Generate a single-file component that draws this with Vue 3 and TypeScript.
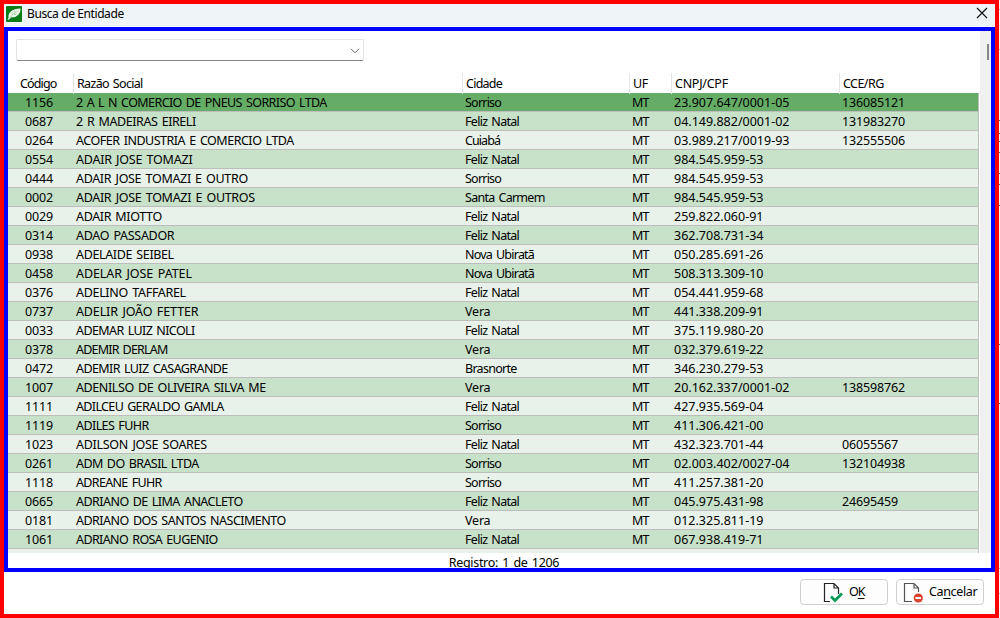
<script setup lang="ts">
import type { Directive } from 'vue'

type Row = [string, string, number, string, string, string]

const rows: Row[] = [
  ['1156', '2 A L N COMERCIO DE PNEUS SORRISO LTDA', 251, 'Sorriso', '23.907.647/0001-05', '136085121'],
  ['0687', '2 R MADEIRAS EIRELI', 120, 'Feliz Natal', '04.149.882/0001-02', '131983270'],
  ['0264', 'ACOFER INDUSTRIA E COMERCIO LTDA', 218, 'Cuiabá', '03.989.217/0019-93', '132555506'],
  ['0554', 'ADAIR JOSE TOMAZI', 116.5, 'Feliz Natal', '984.545.959-53', ''],
  ['0444', 'ADAIR JOSE TOMAZI E OUTRO', 172, 'Sorriso', '984.545.959-53', ''],
  ['0002', 'ADAIR JOSE TOMAZI E OUTROS', 179, 'Santa Carmem', '984.545.959-53', ''],
  ['0029', 'ADAIR MIOTTO', 86, 'Feliz Natal', '259.822.060-91', ''],
  ['0314', 'ADAO PASSADOR', 98.5, 'Feliz Natal', '362.708.731-34', ''],
  ['0938', 'ADELAIDE SEIBEL', 98, 'Nova Ubiratã', '050.285.691-26', ''],
  ['0458', 'ADELAR JOSE PATEL', 116, 'Nova Ubiratã', '508.313.309-10', ''],
  ['0376', 'ADELINO TAFFAREL', 110, 'Feliz Natal', '054.441.959-68', ''],
  ['0737', 'ADELIR JOÃO FETTER', 122.5, 'Vera', '441.338.209-91', ''],
  ['0033', 'ADEMAR LUIZ NICOLI', 119, 'Feliz Natal', '375.119.980-20', ''],
  ['0378', 'ADEMIR DERLAM', 92, 'Vera', '032.379.619-22', ''],
  ['0472', 'ADEMIR LUIZ CASAGRANDE', 152, 'Brasnorte', '346.230.279-53', ''],
  ['1007', 'ADENILSO DE OLIVEIRA SILVA ME', 190, 'Vera', '20.162.337/0001-02', '138598762'],
  ['1111', 'ADILCEU GERALDO GAMLA', 148, 'Feliz Natal', '427.935.569-04', ''],
  ['1119', 'ADILES FUHR', 73, 'Sorriso', '411.306.421-00', ''],
  ['1023', 'ADILSON JOSE SOARES', 131, 'Feliz Natal', '432.323.701-44', '06055567'],
  ['0261', 'ADM DO BRASIL LTDA', 123, 'Sorriso', '02.003.402/0027-04', '132104938'],
  ['1118', 'ADREANE FUHR', 86, 'Sorriso', '411.257.381-20', ''],
  ['0665', 'ADRIANO DE LIMA ANACLETO', 167, 'Feliz Natal', '045.975.431-98', '24695459'],
  ['0181', 'ADRIANO DOS SANTOS NASCIMENTO', 210, 'Vera', '012.325.811-19', ''],
  ['1061', 'ADRIANO ROSA EUGENIO', 142, 'Feliz Natal', '067.938.419-71', ''],
]

const cityWidths: Record<string, number> = {
  Sorriso: 36.5,
  'Feliz Natal': 54.5,
  'Cuiabá': 35.5,
  'Santa Carmem': 80,
  'Nova Ubiratã': 69.5,
  Vera: 25.5,
  Brasnorte: 52,
}

// Spreads the letters of a label evenly over a given width
const vFit: Directive<HTMLElement, number> = {
  mounted(el, { value }) {
    const n = (el.textContent ?? '').length
    if (n > 1) {
      const natural = el.getBoundingClientRect().width
      el.style.letterSpacing = `${(value - natural) / (n - 0.5)}px`
    }
  },
}
</script>

<template>
  <div class="screen">
    <div class="window">
      <header class="titlebar">
        <svg class="logo" width="16" height="16" viewBox="0 0 16 16">
          <rect width="16" height="16" rx="1" fill="#087d18" />
          <path d="M2.500 11.500C2 6.500 6 2.500 14.500 2.500C14.500 5 14 7 12.500 8.500C10.500 11 8 11.500 5.500 11.300L3 13.500L1.500 14Z" fill="#f1faee" />
          <path d="M3 12.500L6.500 8.500L12.500 4.500M6.500 8.500L6 6M9 6.800V4.500M8 8.500H10.500" fill="none" stroke="#8cc58c" stroke-width=".7" />
        </svg>
        <span v-fit="97" class="title">Busca de Entidade</span>
        <svg class="close" width="12" height="12" viewBox="0 0 12 12"><path d="M1 1L11 11M11 1L1 11" stroke="#111" stroke-width="1.150" /></svg>
      </header>
      <main class="panel">
        <div class="content">
          <div class="combo">
            <svg width="10" height="6" viewBox="0 0 10 6"><path d="M1 .8L5 4.800L9 .8" fill="none" stroke="#666" stroke-width="1" /></svg>
          </div>
          <div class="grid">
            <div class="line head">
              <div class="c0"><span v-fit="37">Código</span></div>
              <div><span v-fit="66">Razão Social</span></div>
              <div><span v-fit="36.5">Cidade</span></div>
              <div><span v-fit="15">UF</span></div>
              <div><span v-fit="53">CNPJ/CPF</span></div>
              <div><span v-fit="41">CCE/RG</span></div>
            </div>
            <div class="body">
              <div v-for="(r, i) in rows" :key="r[0]" class="line row" :class="{ selected: i === 0, odd: i % 2 === 1 }">
                <div class="c0"><span v-fit="28">{{ r[0] }}</span></div>
                <div><span v-fit="r[2]">{{ r[1] }}</span></div>
                <div><span v-fit="cityWidths[r[3]]">{{ r[3] }}</span></div>
                <div><span v-fit="17">MT</span></div>
                <div><span v-fit="r[4].length > 14 ? 115.5 : 89.5">{{ r[4] }}</span></div>
                <div><span v-fit="r[5].length * 7">{{ r[5] }}</span></div>
              </div>
              <div class="row"></div>
            </div>
          </div>
          <div class="status"><span v-fit="110.5">Registro: 1 de 1206</span></div>
        </div>
        <div class="scroll"><div class="thumb"></div></div>
      </main>
      <footer class="actions">
        <button class="ok">
          <svg width="20" height="21" viewBox="0 0 20 21">
            <path d="M7 19.500H1.500V1.500H11L15.500 6V12M11 1.500V6H15.500" fill="none" stroke="#222" stroke-width="1.200" />
            <path d="M8 14.500L12 18.500L19 11.500" fill="none" stroke="#0b9b57" stroke-width="2.800" />
          </svg>
          <span v-fit="16">O<u>K</u></span>
        </button>
        <button class="cancel">
          <svg width="20" height="21" viewBox="0 0 20 21">
            <path d="M9 19.500H1.500V1.500H11L15.500 6V10M11 1.500V6H15.500" fill="none" stroke="#555" stroke-width="1.200" />
            <circle cx="15.300" cy="16" r="4.600" fill="#d8452c" />
            <path d="M12.500 16H18" stroke="#fff" stroke-width="2" />
          </svg>
          <span v-fit="48.5">Ca<u>n</u>celar</span>
        </button>
      </footer>
    </div>
    <svg class="edge" width="1" height="618" viewBox="0 0 1 618">
      <path d="M0 9.500H1M0 49.500H1M0 568.500H1M0 593.500H1" stroke="#bbb" />
      <path d="M0 120.500H1M0 133.500H1M0 141.500H1M0 152.500H1M0 173.500H1M0 184.500H1M0 205.500H1M0 344.500H1M0 403.500H1" stroke="#555" />
    </svg>
  </div>
</template>

<style>
body { margin: 0; overflow: hidden; }
</style>
<style scoped>
.screen { width: 1000px; height: 618px; display: flex; background: #fff; font: 12.5px/18px "Noto Sans", "DejaVu Sans", sans-serif; word-spacing: 1.4px; color: #000; }
.screen * { box-sizing: border-box; }
span { white-space: pre; display: inline-block; }
.window { width: 999px; height: 618px; box-sizing: border-box; border: 4px solid #f00; display: flex; flex-direction: column; background: #fff; }
.edge { flex: none; background: #fafafa; }
.titlebar { height: 23px; flex: none; background: #eff4f9; border-bottom: 1px solid #fff; display: flex; align-items: center; padding: 0 7px 0 2px; }
.logo { margin-top: -3px; }
.title { margin-left: 5px; margin-top: -2px; font-size: 12px; word-spacing: 0; }
.close { margin-left: auto; margin-top: -4px; }
.panel { height: 545px; flex: none; border: 4px solid #00f; display: flex; overflow: hidden; }
.content { width: 972px; height: 537px; flex: none; overflow: hidden; }
.combo { width: 348px; height: 22px; margin: 8px 0 0 8px; border: 1px solid #e4e4e4; border-bottom-color: #868686; border-radius: 2px; display: flex; justify-content: flex-end; align-items: center; padding: 2px 3px 0 0; }
.grid { width: 971px; margin-top: 12px; }
.line { display: grid; grid-template-columns: 65px 389px 167px 42px 168px 1fr; }
.head { height: 20px; line-height: 21px; }
.head > div { border-left: 1px solid #e5e5e5; padding-left: 3px; }
.head > .c0 { padding-left: 12px; border-left: 0; }
.body { height: 460px; overflow: hidden; border-right: 1px solid #bdbdbd; }
.row { height: 19px; background: #e9f2ea; border-bottom: 1px solid #bdbdbd; line-height: 19px; }
.row > div { padding-left: 3px; }
.row > .c0 { padding-left: 17px; }
.odd { background: #c8e1c9; }
.selected { background: #65ad66; }
.status { display: flex; justify-content: center; padding-left: 20px; line-height: 19px; }
.scroll { width: 11px; height: 522px; background: #f0f0f0; padding: 13px 0 0 7px; }
.thumb { width: 2px; height: 16px; background: #888; }
.actions { display: flex; justify-content: flex-end; gap: 8px; padding: 7px 11px 0 0; }
button { width: 88px; height: 26px; border: 1px solid #d0d0d0; border-radius: 4px; background: #fdfdfd; padding: 0; font: inherit; color: #000; display: flex; align-items: center; }
button svg { flex: none; }
.ok svg { margin-left: 22px; }
.ok span { margin-left: 6px; }
.cancel svg { margin-left: 6px; }
.cancel span { margin-left: 6px; }
u { text-underline-offset: 2px; }
</style>
